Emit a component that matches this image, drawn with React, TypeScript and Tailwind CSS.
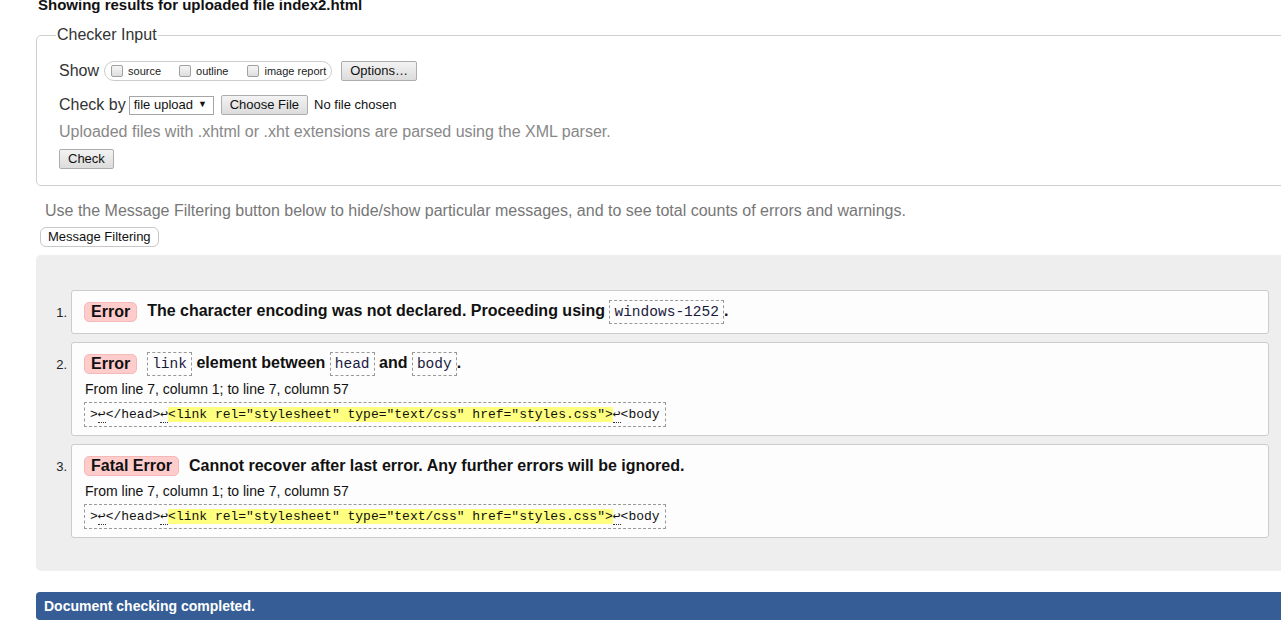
import React from 'react';

const mono = "font-['Consolas','Liberation_Mono','DejaVu_Sans_Mono',monospace]";

function Btn({ children, className = '' }: { children: React.ReactNode; className?: string }) {
  return (
    <span
      className={`inline-flex items-center justify-center h-[20px] px-[8px] text-[13px] text-[#111] border border-[#adadad] rounded-[2px] bg-gradient-to-b from-[#f3f3f3] to-[#dcdcdc] ${className}`}
    >
      {children}
    </span>
  );
}

function Box() {
  return (
    <span className="inline-block w-[12px] h-[12px] border border-[#a0a0a0] rounded-[2px] bg-gradient-to-b from-[#f6f6f6] to-[#dedede] mr-[5px]" />
  );
}

function Code({ children }: { children: React.ReactNode }) {
  return (
    <code className={`${mono} inline-block border border-dashed border-[#999] px-[4px] py-[1px] leading-[20px] text-[14.5px] font-normal text-[#1a1a40] align-middle`}>
      {children}
    </code>
  );
}

function Lf() {
  return <span className="border-b border-dotted border-[#333]">↩</span>;
}

function Extract() {
  return (
    <div className={`${mono} inline-block border border-dashed border-[#999] px-[5px] py-[3px] text-[13px] leading-[17px] text-[#111] whitespace-pre`}>
      {'>'}<Lf />{'</head>'}<Lf />
      <span className="bg-[#ffff80]">{'<link rel="stylesheet" type="text/css" href="styles.css">'}</span>
      <Lf />{'<body'}
    </div>
  );
}

function Badge({ children }: { children: React.ReactNode }) {
  return (
    <span className="inline-flex items-center h-[20px] px-[6px] rounded-[5px] bg-[#ffcccc] border border-[#f3b8b8] font-bold text-[16px] text-[#111] mr-[10px]">
      {children}
    </span>
  );
}

const messages = [
  {
    n: '1.',
    type: 'Error',
    text: (
      <>
        The character encoding was not declared. Proceeding using <Code>windows-1252</Code>.
      </>
    ),
    extract: false,
  },
  {
    n: '2.',
    type: 'Error',
    text: (
      <>
        <Code>link</Code> element between <Code>head</Code> and <Code>body</Code>.
      </>
    ),
    extract: true,
  },
  {
    n: '3.',
    type: 'Fatal Error',
    text: <>Cannot recover after last error. Any further errors will be ignored.</>,
    extract: true,
  },
];

export default function App() {
  return (
    <div className="w-[1281px] h-[624px] overflow-hidden bg-white font-['Liberation_Sans',Arial,sans-serif] text-[#111]">
      <div className="w-[1320px] pl-[36px]">
        <h2 className="text-[15px] font-bold leading-[18px] mt-[-4px] pl-[2px]">Showing results for uploaded file index2.html</h2>

        {/* Checker Input */}
        <fieldset className="mt-[12px] border border-[#cfcfcf] rounded-[5px] pl-[22px] pb-[15px]">
          <legend className="text-[16px] leading-[18px] text-[#333] px-[1px] ml-[-3px]">Checker Input</legend>
          <div className="flex items-center h-[20px] mt-[17px] text-[16px] text-[#333]">
            <span>Show</span>
            <span className="ml-[5px] inline-flex items-center h-[20px] border border-[#ccc] rounded-full pl-[6px] pr-[5px] text-[11px] text-[#222]">
              <Box />source
              <span className="w-[18px]" />
              <Box />outline
              <span className="w-[19px]" />
              <Box />image report
            </span>
            <Btn className="ml-[9px]">Options…</Btn>
          </div>
          <div className="flex items-center h-[20px] mt-[14px] text-[16px] text-[#333]">
            <span>Check by</span>
            <span className="ml-[3px] inline-flex items-center h-[19px] w-[85px] border border-[#a6a6a6] bg-white pl-[4px] text-[13px] text-[#111]">
              file upload <span className="ml-[5px] text-[9px]">▼</span>
            </span>
            <Btn className="ml-[7px]">Choose File</Btn>
            <span className="ml-[6px] text-[13px] text-[#111]">No file chosen</span>
          </div>
          <p className="mt-[7px] text-[16px] leading-[20px] text-[#888]">Uploaded files with .xhtml or .xht extensions are parsed using the XML parser.</p>
          <div className="mt-[4px]">
            <Btn>Check</Btn>
          </div>
        </fieldset>

        <p className="mt-[15px] pl-[9px] text-[16px] leading-[20px] text-[#777]">
          Use the Message Filtering button below to hide/show particular messages, and to see total counts of errors and warnings.
        </p>
        <div className="mt-[3px] pl-[4px]">
          <span className="inline-flex items-center h-[20px] px-[7px] text-[13px] text-[#111] border border-[#c8c8c8] rounded-[6px] bg-white">Message Filtering</span>
        </div>

        {/* Results */}
        <div className="mt-[7px] w-[1245px] bg-[#eeeeee] rounded-l-[5px] pt-[35px] pb-[33px] pr-[12px]">
          <ol className="flex flex-col gap-[8px]">
            {messages.map((m) => (
              <li key={m.n} className="flex">
                <span className="w-[35px] pt-[13px] pr-[4px] text-right text-[13px] text-[#222] leading-[20px]">{m.n}</span>
                <div className={`flex-1 bg-[#fdfdfd] border border-[#ccc] rounded-[3px] pl-[12px] ${m.extract ? 'pt-[10px] pb-[8px]' : 'pt-[10px] pb-[11px]'}`}>
                  <div className="flex items-center h-[21px] text-[16px] font-bold text-[#111] whitespace-pre">
                    <Badge>{m.type}</Badge>
                    <span>{m.text}</span>
                  </div>
                  {m.extract && (
                    <>
                      <p className="mt-[7px] text-[14px] leading-[17px] text-[#111] pl-[1px]">From line 7, column 1; to line 7, column 57</p>
                      <div className="mt-[3px]">
                        <Extract />
                      </div>
                    </>
                  )}
                </div>
              </li>
            ))}
          </ol>
        </div>

        <div className="mt-[21px] h-[28px] bg-[#365d95] rounded-l-[4px] flex items-center pl-[8px] text-[14px] font-bold text-white">
          Document checking completed.
        </div>
      </div>
    </div>
  );
}
